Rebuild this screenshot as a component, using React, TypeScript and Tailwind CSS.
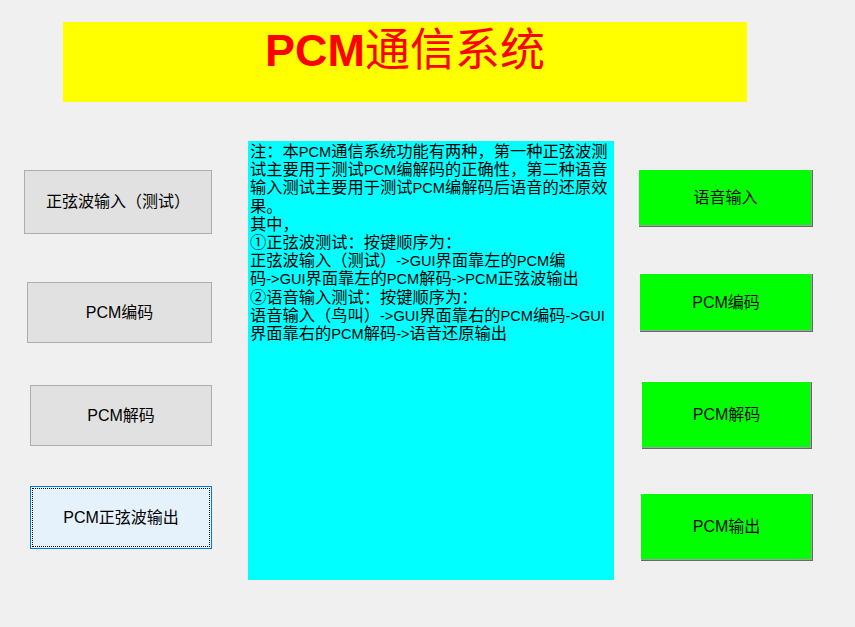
import React from "react";

const FONT = { fontFamily: '"Liberation Sans", "Noto Sans CJK SC", sans-serif' };

const lines = [
  "注：本PCM通信系统功能有两种，第一种正弦波测",
  "试主要用于测试PCM编解码的正确性，第二种语音",
  "输入测试主要用于测试PCM编解码后语音的还原效",
  "果。",
  "其中，",
  "①正弦波测试：按键顺序为：",
  "正弦波输入（测试）->GUI界面靠左的PCM编",
  "码->GUI界面靠左的PCM解码->PCM正弦波输出",
  "②语音输入测试：按键顺序为：",
  "语音输入（鸟叫）->GUI界面靠右的PCM编码->GUI",
  "界面靠右的PCM解码->语音还原输出",
];

function Line({ text }: { text: string }) {
  const parts = text.split(/([\x20-\x7e]+)/).filter((p) => p.length > 0);
  return (
    <div className="h-[18.2px]">
      {parts.map((p, i) =>
        /^[\x20-\x7e]+$/.test(p) ? (
          <span key={i} className="text-[14.6px] leading-none">
            {p}
          </span>
        ) : (
          <span key={i}>{p}</span>
        )
      )}
    </div>
  );
}

const grayBtn =
  "flex items-center justify-center bg-[#e1e1e1] border border-[#adadad] text-[16px] text-black";
const greenBtn =
  "flex items-center justify-center bg-[#00ff00] text-[16px] text-[#0a0a0a] shadow-[inset_1px_1px_0_#ffffff,inset_-1px_-1px_0_#696969,inset_-2px_-2px_0_#a0a0a0]";

export default function App() {
  return (
    <div
      className="w-[855px] h-[627px] bg-[#f0f0f0] overflow-hidden [text-spacing-trim:space-all]"
      style={FONT}
    >
      <div className="pt-[22px] pl-[63px]">
        <div className="w-[684px] h-[80px] bg-[#ffff00] flex justify-center pt-[6px]">
          <span className="text-[45px] leading-[45px] text-[#ff0000] h-fit">
            <span className="font-bold">PCM</span>
            <span className="font-normal">通信系统</span>
          </span>
        </div>
      </div>
      <div className="flex items-start mt-[39px]">
        <div className="flex flex-col w-[212px] pt-[29px]">
          <div className={`${grayBtn} ml-[24px] w-[188px] h-[64px]`}>正弦波输入（测试）</div>
          <div className={`${grayBtn} ml-[27px] w-[185px] h-[61px] mt-[48px]`}>PCM编码</div>
          <div className={`${grayBtn} ml-[30px] w-[182px] h-[61px] mt-[42px]`}>PCM解码</div>
          <div className="flex items-center justify-center ml-[30px] w-[182px] h-[63px] mt-[40px] bg-[#e5f1fb] border border-[#0078d7] outline-1 outline-dotted outline-black outline-offset-[-3px] text-[16px] text-black">
            PCM正弦波输出
          </div>
        </div>
        <div className="ml-[36px] w-[366px] h-[439px] bg-[#00ffff] pl-[2px] pt-[1px] text-[16.25px] leading-[18.2px] text-black whitespace-pre overflow-hidden">
          {lines.map((l, i) => (
            <Line key={i} text={l} />
          ))}
        </div>
        <div className="flex flex-col pt-[28px]">
          <div className={`${greenBtn} ml-[24px] w-[175px] h-[58px]`}>语音输入</div>
          <div className={`${greenBtn} ml-[25px] w-[174px] h-[59px] mt-[46px]`}>PCM编码</div>
          <div className={`${greenBtn} ml-[27px] w-[171px] h-[68px] mt-[49px]`}>PCM解码</div>
          <div className={`${greenBtn} ml-[26px] w-[173px] h-[68px] mt-[44px]`}>PCM输出</div>
        </div>
      </div>
    </div>
  );
}
